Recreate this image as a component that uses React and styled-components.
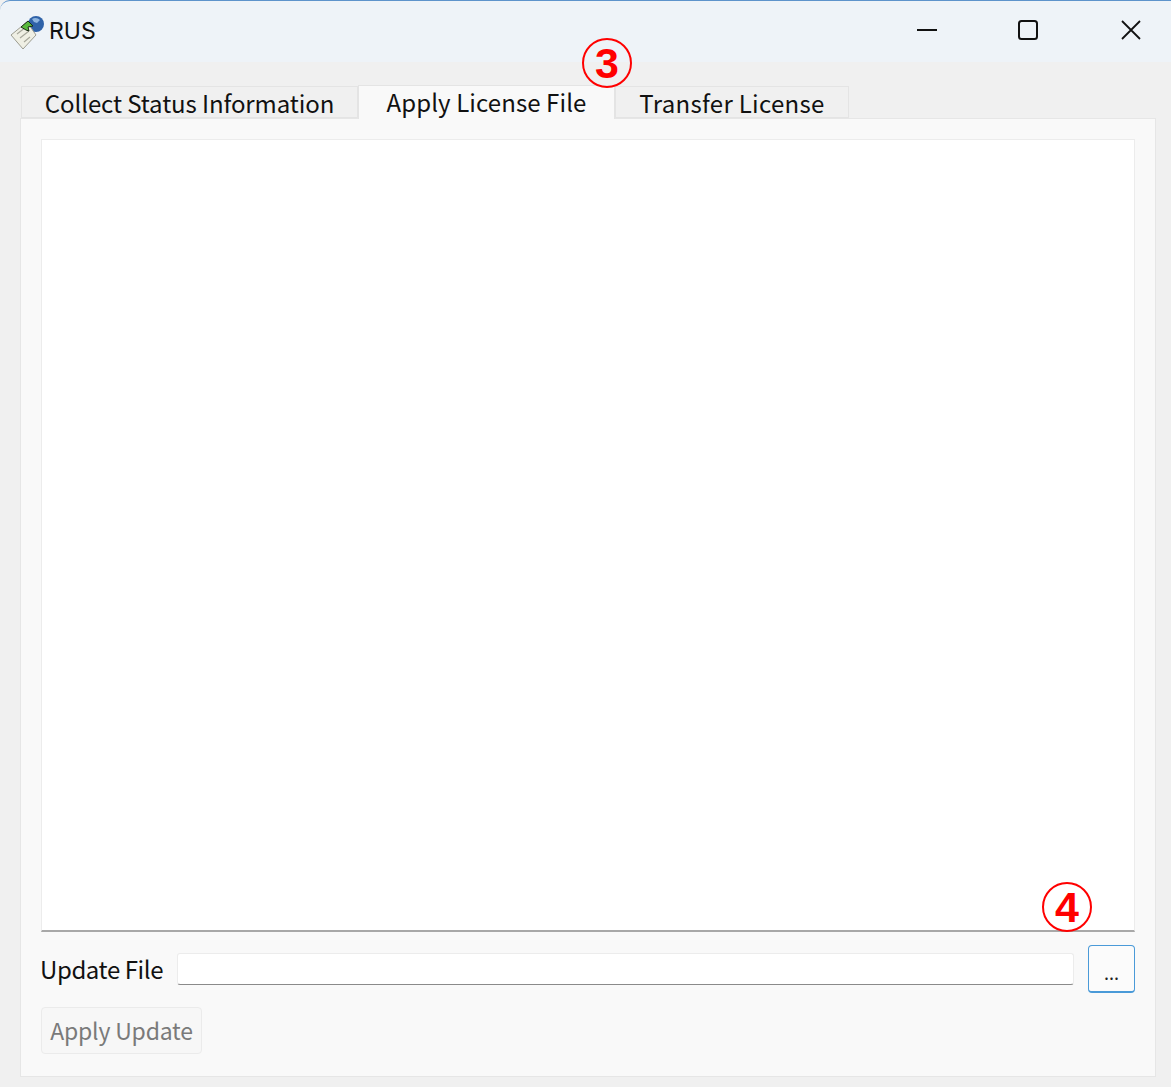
import React from 'react';
import styled, { createGlobalStyle } from 'styled-components';

const GlobalStyle = createGlobalStyle`
    html, body {
        margin: 0;
        padding: 0;
        background: #f0f0f0;
    }
    body {
        font-family: "Noto Sans CJK JP", "Noto Sans", sans-serif;
        color: #000;
    }
`;

const Window = styled.div`
    position: relative;
    width: 1171px;
    height: 1087px;
    overflow: hidden;
    background: #f0f0f0;
    display: flex;
    flex-direction: column;
`;

const TitleBar = styled.header`
    height: 61px;
    flex: none;
    display: flex;
    align-items: center;
    background: #eef3f8;
    border-top: 1px solid #5d93cb;
    border-top-left-radius: 10px;
    padding-left: 10px;
`;

const AppTitle = styled.span`
    font-family: "Inter", "Noto Sans", sans-serif;
    font-size: 23px;
    margin-left: 5px;
    margin-top: -1px;
    color: #111;
`;

const WindowButtons = styled.div`
    margin-left: auto;
    display: flex;
    align-items: center;
    height: 100%;
`;

const WindowButton = styled.div`
    box-sizing: border-box;
    width: 102px;
    height: 60px;
    padding-right: ${p => p.$nudge || 0}px;
    display: flex;
    align-items: center;
    justify-content: center;
    margin-top: -3px;
    &:last-child {
        margin-right: -11px;
    }
`;

const Content = styled.div`
    flex: 1;
    display: flex;
    flex-direction: column;
    padding: 23px 15px 10px 20px;
`;

const TabStrip = styled.div`
    height: 34px;
    flex: none;
    display: flex;
    align-items: flex-end;
    padding-left: 1px;
    position: relative;
    z-index: 1;
    margin-bottom: -1px;
`;

const Tab = styled.div`
    box-sizing: border-box;
    width: ${p => p.$width}px;
    height: ${p => (p.$active ? 34 : 32)}px;
    margin-bottom: ${p => (p.$active ? 0 : 1)}px;
    background: ${p => (p.$active ? '#f9f9f9' : '#f0f0f0')};
    border: 1px solid #e4e4e4;
    border-bottom: ${p => (p.$active ? 'none' : '1px solid #e4e4e4')};
    font-size: 24px;
    line-height: 31px;
    letter-spacing: ${p => p.$spacing || 0}px;
    text-align: center;
    white-space: nowrap;
    color: #111;
`;

const Panel = styled.section`
    flex: 1;
    box-sizing: border-box;
    background: #f9f9f9;
    border: 1px solid #e6e6e6;
    padding: 20px 20px 22px 20px;
    display: flex;
    flex-direction: column;
`;

const LogArea = styled.div`
    height: 793px;
    flex: none;
    box-sizing: border-box;
    background: #fff;
    border: 1px solid #ececec;
    border-bottom: 2px solid #a8a8a8;
`;

const FileRow = styled.div`
    display: flex;
    align-items: center;
    height: 48px;
    margin-top: 13px;
`;

const FileLabel = styled.label`
    width: 137px;
    margin-left: -1px;
    flex: none;
    font-size: 24px;
    letter-spacing: -0.4px;
    line-height: 30px;
    white-space: nowrap;
    color: #111;
`;

const FileInput = styled.div`
    flex: 1;
    height: 32px;
    box-sizing: border-box;
    background: #fff;
    border: 1px solid #ececec;
    border-bottom: 1px solid #8a8a8a;
    border-radius: 3px;
`;

const BrowseButton = styled.button`
    width: 47px;
    height: 48px;
    flex: none;
    margin-left: 14px;
    padding: 6px 0 0;
    box-sizing: border-box;
    background: #fbfbfb;
    border: 1px solid #4a9ad8;
    border-bottom-width: 2px;
    border-radius: 4px;
    font-family: inherit;
    font-size: 18px;
    line-height: 1;
    color: #222;
`;

const ApplyButton = styled.button`
    width: 161px;
    height: 47px;
    margin-top: 14px;
    padding: 0 0 2px;
    box-sizing: border-box;
    background: #f7f7f7;
    border: 1px solid #ebebeb;
    border-radius: 4px;
    font-family: inherit;
    font-size: 23px;
    letter-spacing: -0.2px;
    color: #7a7a7a;
`;

const Badge = styled.div`
    position: absolute;
    left: ${p => p.$left}px;
    top: ${p => p.$top}px;
    z-index: 2;
    box-sizing: border-box;
    width: 50px;
    height: 50px;
    border: 2px solid #ff0000;
    border-radius: 50%;
    display: flex;
    align-items: center;
    justify-content: center;
    font-family: "Liberation Sans", sans-serif;
    font-weight: 700;
    font-size: 43px;
    line-height: 1;
    color: #ff0000;
`;

const AppIcon = () => (
    <svg width="34" height="36" viewBox="0 0 34 36">
        <circle cx="26" cy="10" r="8" fill="#2f62a8" />
        <path d="M22 5c3-2 6-1 8 1l-3 3-3-1z" fill="#8db4df" />
        <path d="M1 21 17 8l9 13-13 14z" fill="#efefe4" stroke="#9c9c90" />
        <path d="M7 20l9-7M10 24l9-7M14 28l6-5" stroke="#a8a89c" strokeWidth="1.2" />
        <path d="M11 13l7-6 5 5-5 1 1 4-3-1z" fill="#58b83c" stroke="#1c2a18" strokeWidth="1" />
    </svg>
);

const MinimizeIcon = () => (
    <svg width="22" height="22" viewBox="0 0 22 22">
        <path d="M1 11h20" stroke="#111" strokeWidth="2" />
    </svg>
);

const MaximizeIcon = () => (
    <svg width="22" height="22" viewBox="0 0 22 22">
        <rect x="2" y="2" width="18" height="18" rx="2.5" fill="none" stroke="#111" strokeWidth="2" />
    </svg>
);

const CloseIcon = () => (
    <svg width="22" height="22" viewBox="0 0 22 22">
        <path d="M2 2l18 18M20 2 2 20" stroke="#111" strokeWidth="1.8" />
    </svg>
);

export default function App() {
    return (
        <Window>
            <GlobalStyle />
            <TitleBar>
                <AppIcon />
                <AppTitle>RUS</AppTitle>
                <WindowButtons>
                    <WindowButton><MinimizeIcon /></WindowButton>
                    <WindowButton $nudge={2}><MaximizeIcon /></WindowButton>
                    <WindowButton><CloseIcon /></WindowButton>
                </WindowButtons>
            </TitleBar>
            <Content>
                <TabStrip>
                    <Tab $width={337} $spacing={-0.1}>Collect Status Information</Tab>
                    <Tab $width={257} $spacing={0.1} $active>Apply License File</Tab>
                    <Tab $width={234} $spacing={0.3}>Transfer License</Tab>
                </TabStrip>
                <Panel>
                    <LogArea />
                    <FileRow>
                        <FileLabel>Update File</FileLabel>
                        <FileInput />
                        <BrowseButton>...</BrowseButton>
                    </FileRow>
                    <div>
                        <ApplyButton disabled>Apply Update</ApplyButton>
                    </div>
                </Panel>
            </Content>
            <Badge $left={582} $top={38}>3</Badge>
            <Badge $left={1042} $top={882}>4</Badge>
        </Window>
    );
}
